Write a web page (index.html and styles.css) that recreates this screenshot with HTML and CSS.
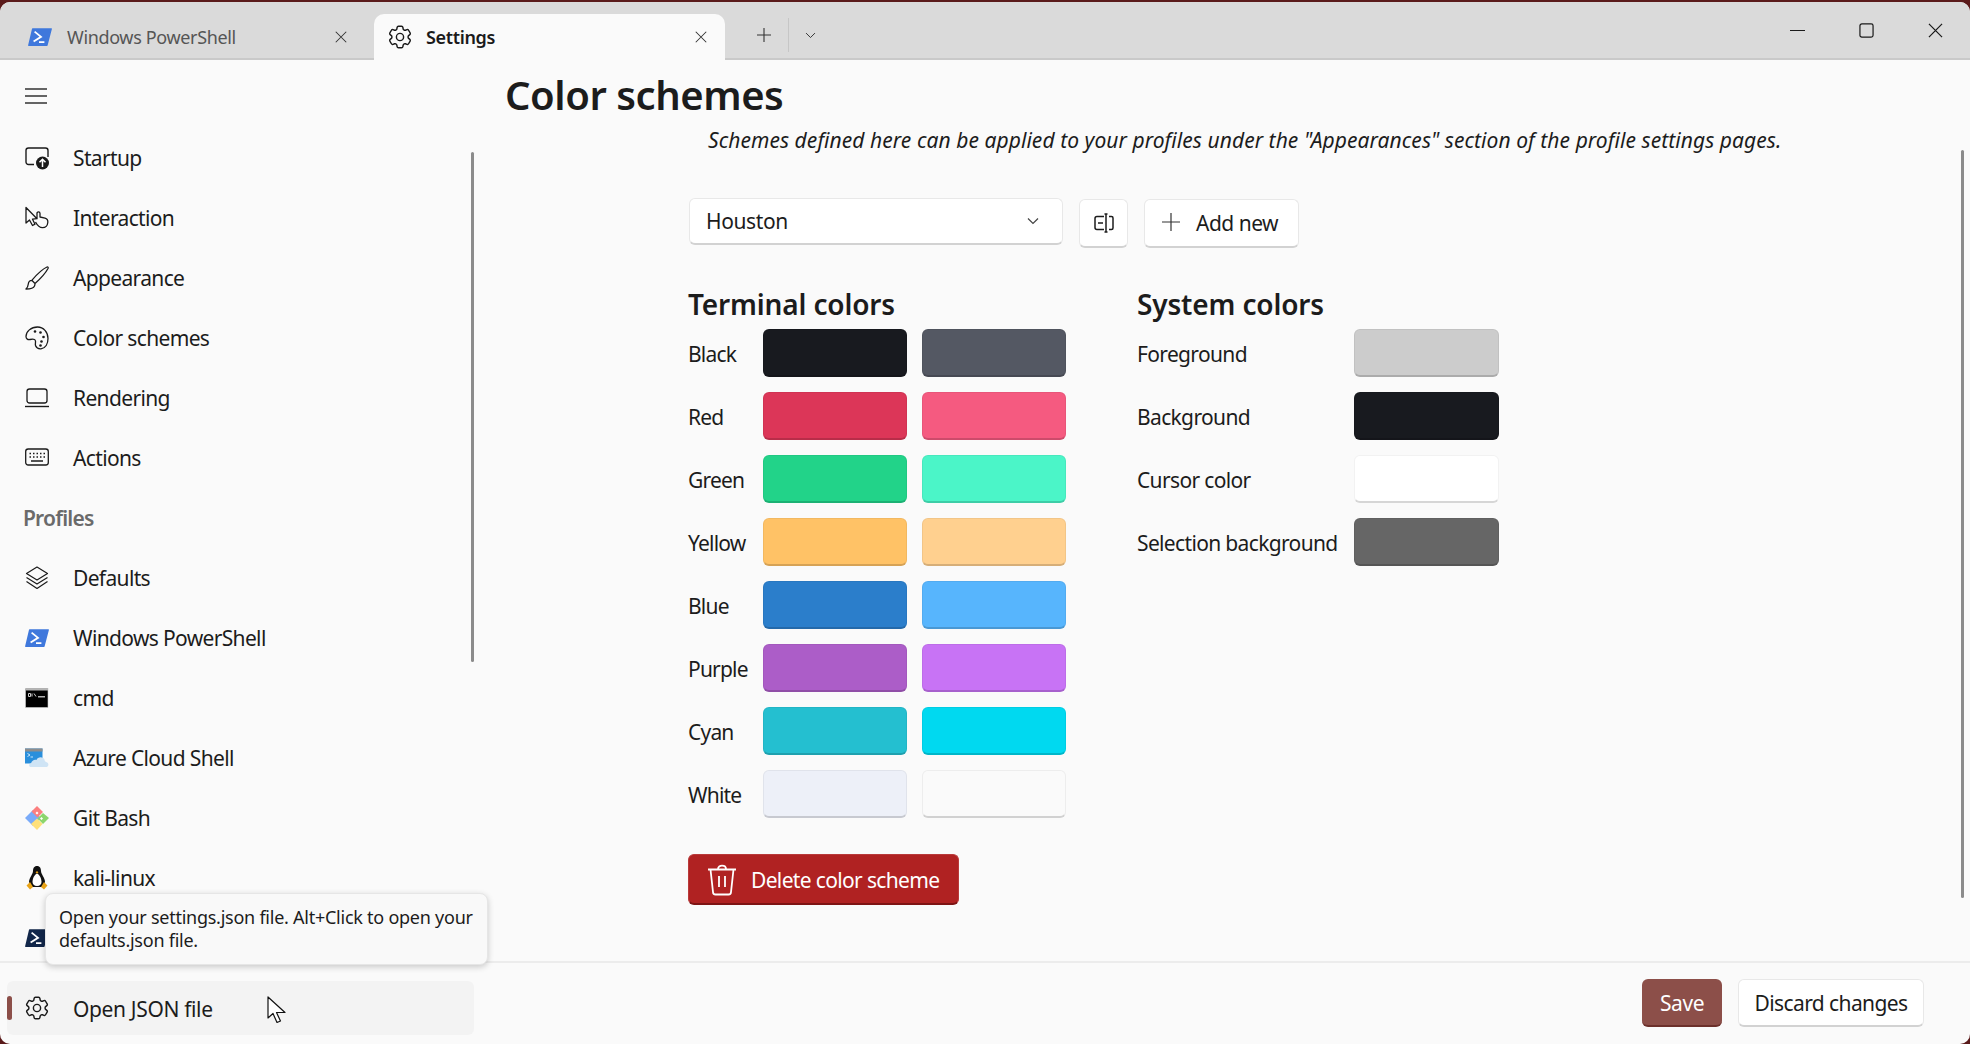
FILE: index.html
```html
<!DOCTYPE html>
<html lang="en">
<head>
    <meta charset="UTF-8">
    <meta name="viewport" content="width=device-width, initial-scale=1.0">
    <title>Settings</title>
    <link rel="stylesheet" href="styles.css">
</head>
<body>
    <svg class="defs" width="0" height="0">
        <symbol id="gear" viewBox="2 2 20 20">
            <path fill="none" stroke="currentColor" stroke-width="1.2" d="M9.594 3.94c.09-.542.56-.94 1.11-.94h2.593c.55 0 1.02.398 1.11.94l.213 1.281c.063.374.313.686.645.87.074.04.147.083.22.127.325.196.72.257 1.075.124l1.217-.456a1.125 1.125 0 011.37.49l1.296 2.247a1.125 1.125 0 01-.26 1.431l-1.003.827c-.293.241-.438.613-.43.992a7.723 7.723 0 010 .255c-.008.378.137.75.43.991l1.004.827c.424.35.534.955.26 1.43l-1.298 2.247a1.125 1.125 0 01-1.369.491l-1.217-.456c-.355-.133-.75-.072-1.076.124a6.57 6.57 0 01-.22.128c-.331.183-.581.495-.644.869l-.213 1.28c-.09.543-.56.941-1.11.941h-2.594c-.55 0-1.02-.398-1.11-.94l-.213-1.281c-.062-.374-.312-.686-.644-.87a6.52 6.52 0 01-.22-.127c-.325-.196-.72-.257-1.076-.124l-1.217.456a1.125 1.125 0 01-1.369-.49l-1.297-2.247a1.125 1.125 0 01.26-1.431l1.004-.827c.292-.24.437-.613.43-.992a6.932 6.932 0 010-.255c.007-.378-.138-.75-.43-.99l-1.004-.828a1.125 1.125 0 01-.26-1.43l1.297-2.247a1.125 1.125 0 011.37-.491l1.216.456c.356.133.751.072 1.076-.124.072-.044.146-.087.22-.128.332-.183.582-.495.644-.869l.214-1.281z"/>
            <circle cx="12" cy="12" r="3" fill="none" stroke="currentColor" stroke-width="1.2"/>
        </symbol>
        <symbol id="ps" viewBox="0 0 24 24">
            <path fill="#3f78dc" d="M4.6 3.2H23.4c.5 0 .6.3.5.7L19.6 20.4c-.1.3-.3.5-.7.5H.6c-.4 0-.6-.3-.5-.7L4 3.7c.1-.3.3-.5.6-.5z"/>
            <path fill="none" stroke="#fff" stroke-width="1.8" d="M6.6 6.6 13 11.8 5.6 16.4M11 17.2h5.4"/>
        </symbol>
        <symbol id="close" viewBox="0 0 16 16">
            <path fill="none" stroke="currentColor" stroke-width="1.2" d="M2 2 14 14M14 2 2 14"/>
        </symbol>
    </svg>

    <div class="app">
        <header class="titlebar">
            <div class="tab">
                <svg class="tab-icon"><use href="#ps"/></svg>
                <span class="tab-name">Windows PowerShell</span>
                <svg class="tab-close"><use href="#close"/></svg>
            </div>
            <div class="tab tab-active">
                <svg class="tab-icon"><use href="#gear"/></svg>
                <span class="tab-name">Settings</span>
                <svg class="tab-close"><use href="#close"/></svg>
            </div>
            <div class="tab-tools">
                <svg class="tool-plus" viewBox="0 0 16 16"><path fill="none" stroke="#333" stroke-width="1.1" d="M8 1V15M1 8H15"/></svg>
                <span class="tool-divider"></span>
                <svg class="tool-chevron" viewBox="0 0 16 16"><path fill="none" stroke="#333" stroke-width="1.2" d="M2.500 5 8 10.500 13.500 5"/></svg>
            </div>
            <div class="window-controls">
                <svg class="win-btn" viewBox="0 0 16 16"><path stroke="#1a1a1a" stroke-width="1.3" d="M0 8H16"/></svg>
                <svg class="win-btn" viewBox="0 0 16 16"><rect x="1" y="1" width="14" height="14" rx="2" fill="none" stroke="#1a1a1a" stroke-width="1.3"/></svg>
                <svg class="win-btn" viewBox="0 0 16 16"><path fill="none" stroke="#1a1a1a" stroke-width="1.3" d="M1 1 15 15M15 1 1 15"/></svg>
            </div>
        </header>

        <div class="body-row">
            <nav class="sidebar">
                <div class="hamburger">
                    <svg width="22" height="16" viewBox="0 0 22 16"><path stroke="#333" stroke-width="1.4" d="M0 1H22M0 8H22M0 15H22"/></svg>
                </div>
                <a class="nav-item">
                    <svg class="nav-icon" viewBox="0 0 24 24"><path fill="none" stroke="#1a1a1a" stroke-width="1.4" d="M9 18.500H3.500A2.500 2.500 0 0 1 1 16V4.500A2.500 2.500 0 0 1 3.500 2h17A2.500 2.500 0 0 1 23 4.500V11"/><circle cx="17.500" cy="17" r="6.500" fill="#1a1a1a"/><path fill="none" stroke="#fff" stroke-width="1.5" d="M17.500 21V13.500M14.500 16.300 17.500 13.300 20.500 16.300"/></svg>
                    <span>Startup</span>
                </a>
                <a class="nav-item">
                    <svg class="nav-icon" viewBox="0 0 24 24"><path fill="none" stroke="#1a1a1a" stroke-width="1.3" stroke-linejoin="round" d="M1 1.500V17l3.500-3 3 5.500 2.500-1.300-2.500-5 4.500-.5zM12 6.500l0 6.500M12 7.500c0-2.300 3-2.300 3 0V11l5 1.200c2.500.8 3 2.500 2.800 4.300-.3 3-2.300 5.200-5.300 5.200-3.300 0-5-2-7-5.700"/></svg>
                    <span>Interaction</span>
                </a>
                <a class="nav-item">
                    <svg class="nav-icon" viewBox="0 0 24 24"><path fill="none" stroke="#1a1a1a" stroke-width="1.3" stroke-linejoin="round" d="M22 1c1-.3 1.500.5 1 1.500C20 8 14 14 10 17.500L6.800 14.300C10.500 10 16.500 3.500 22 1zM6.800 14.300C4 14.500 3.500 16 3.300 18 3.100 20 2 22 1 23c4 0 7.500-.5 8.500-3 .5-1 .5-1.500.5-2.500"/></svg>
                    <span>Appearance</span>
                </a>
                <a class="nav-item">
                    <svg class="nav-icon" viewBox="0 0 24 24"><path fill="none" stroke="#1a1a1a" stroke-width="1.3" d="M12.500 1C6 1 1 5.500 1 10.500c0 2.500 2 3.500 4 3 2.500-.6 4.500-.8 5.300.8 .8 1.500-.5 3.500.3 5.500 .8 2 3 3.200 5.400 3 4.500-.5 7-5 7-10.300C23 6 18.500 1 12.500 1z"/><circle cx="10" cy="5.500" r="1.300" fill="#1a1a1a"/><circle cx="15.500" cy="6.500" r="1.300" fill="#1a1a1a"/><circle cx="18.500" cy="11" r="1.300" fill="#1a1a1a"/><circle cx="16.500" cy="15.500" r="1.300" fill="#1a1a1a"/><circle cx="15.500" cy="19.500" r="1.300" fill="#1a1a1a"/></svg>
                    <span>Color schemes</span>
                </a>
                <a class="nav-item">
                    <svg class="nav-icon" viewBox="0 0 24 24"><rect x="2" y="3" width="20" height="14" rx="2.500" fill="none" stroke="#1a1a1a" stroke-width="1.3"/><path stroke="#1a1a1a" stroke-width="1.4" d="M0 20.500H24"/></svg>
                    <span>Rendering</span>
                </a>
                <a class="nav-item">
                    <svg class="nav-icon" viewBox="0 0 24 24"><rect x=".7" y="3" width="22.600" height="16" rx="2.500" fill="none" stroke="#1a1a1a" stroke-width="1.3"/><path stroke="#1a1a1a" stroke-width="1.5" stroke-dasharray="1.500 2" d="M4.500 7.500H20M4.500 11H20"/><path stroke="#1a1a1a" stroke-width="1.5" d="M6 15H18"/></svg>
                    <span>Actions</span>
                </a>
                <div class="nav-heading">Profiles</div>
                <a class="nav-item">
                    <svg class="nav-icon" viewBox="0 0 24 24"><path fill="none" stroke="#1a1a1a" stroke-width="1.2" stroke-linejoin="round" d="M12 1 22.500 7.500 12 14 1.500 7.500zM1.500 11.500 12 18 22.500 11.500M1.500 15.500 12 22.500 22.500 15.500"/></svg>
                    <span>Defaults</span>
                </a>
                <a class="nav-item">
                    <svg class="nav-icon"><use href="#ps"/></svg>
                    <span>Windows PowerShell</span>
                </a>
                <a class="nav-item">
                    <svg class="nav-icon" viewBox="0 0 24 24"><rect x=".5" y="2.500" width="22.500" height="19" fill="#000" stroke="#cfcfcf" stroke-width=".6"/><rect x=".5" y="2.500" width="22.500" height="2" fill="#b5b5b5"/><path fill="none" stroke="#ccc" stroke-width="1" d="M3.500 7.500h2v3h-2zM7 7.500v3M9 7.500l2 3"/><path stroke="#ddd" stroke-width="1.200" d="M13 10.800H20"/></svg>
                    <span>cmd</span>
                </a>
                <a class="nav-item">
                    <svg class="nav-icon" viewBox="0 0 24 24"><rect x="0" y="2.500" width="17.500" height="15" fill="#2a8fdc"/><rect x="0" y="2.500" width="17.500" height="3" fill="#8d8d8d"/><path fill="none" stroke="#d8eefc" stroke-width=".9" d="M2.500 7.500 5 9 2.500 10.500M5.500 11H8"/><path fill="#cfe4f5" d="M6 21c-2.500 0-2.500-3.500 0-3.800C7 14.500 9.500 13 11.500 14c1-3 6-4 8-.5 0 1 .5 2 1.500 2.500 3.500 1 3 5-.5 5z"/></svg>
                    <span>Azure Cloud Shell</span>
                </a>
                <a class="nav-item">
                    <svg class="nav-icon" viewBox="0 0 24 24"><path fill="#7aabf9" d="M0 12 8 4l8 8-8 8z"/><path fill="#fb7f7f" d="M6.500 5.500 12 0l6 6-5.500 5.500z"/><path fill="#8cd56c" d="M12.500 12.500 18 7l6 5-6 6z"/><path fill="#ffe07a" d="M6 18l6-5.500L17.500 18 12 24z"/><path fill="#fff" d="M10.500 7 12 5.500l1.500 1.500L12 8.500zM15 12.500l1.500-1.500 1.500 1.500-1.500 1.500z"/></svg>
                    <span>Git Bash</span>
                </a>
                <a class="nav-item">
                    <svg class="nav-icon" viewBox="0 0 24 24"><path fill="#111" d="M12 0c-3 0-4 2.500-4 5 0 3-4 7-4 11 0 2 1 4 3 5h10c2-1 3-3 3-5 0-4-4-8-4-11 0-2.500-1-5-4-5z"/><path fill="#fff" d="M12 7.500c-2.500 1-4.500 5-4.500 8.500 0 2 1.500 4 4.500 4s4.500-2 4.500-4c0-3.500-2-7.500-4.500-8.500z"/><path fill="#e8a317" d="M12 5 10.500 6.500 12 7.500 13.500 6.500zM1.500 19.500 5 16l3 5-3 2.500zM22.500 19.500 19 16l-3 5 3 2.500z"/></svg>
                    <span>kali-linux</span>
                </a>
                <a class="nav-item">
                    <svg class="nav-icon" viewBox="0 0 24 24"><path fill="#12274a" d="M4.600 3.200H23.400c.5 0 .6.3.5.7L19.600 20.400c-.1.3-.3.5-.7.5H.6c-.4 0-.6-.3-.5-.7L4 3.700c.1-.3.300-.5.600-.5z"/><path fill="none" stroke="#fff" stroke-width="1.800" d="M6.600 6.600 13 11.800 5.600 16.400M11 17.200h5.400"/></svg>
                </a>
                <div class="scrollbar scrollbar-nav"></div>
            </nav>

            <main class="content">
                <h1 class="page-title">Color schemes</h1>
                <p class="page-desc">Schemes defined here can be applied to your profiles under the "Appearances" section of the profile settings pages.</p>

                <div class="scheme-bar">
                    <div class="dropdown">
                        <span>Houston</span>
                        <svg width="12" height="12" viewBox="0 0 12 12"><path fill="none" stroke="#444" stroke-width="1.200" d="M1 3.500 6 8.500 11 3.500"/></svg>
                    </div>
                    <button class="btn btn-icon">
                        <svg width="22" height="22" viewBox="0 0 22 22"><path fill="none" stroke="#1c1c1c" stroke-width="1.500" d="M11 4.500H4a2 2 0 0 0-2 2v9a2 2 0 0 0 2 2h7M16 4.500h2.500a1.500 1.500 0 0 1 1.500 1.500v10a1.500 1.500 0 0 1-1.500 1.500H16M11.500 2h3M13 2V20M11.500 20h3M5 11H10"/></svg>
                    </button>
                    <button class="btn btn-add">
                        <svg class="add-plus" width="20" height="20" viewBox="0 0 20 20"><path stroke="#333" stroke-width="1.200" d="M10 1V19M1 10H19"/></svg>
                        <span>Add new</span>
                    </button>
                </div>

                <div class="color-columns">
                    <section class="color-group">
                        <h2>Terminal colors</h2>
                        <div class="swatch-grid terminal-grid">
                            <span>Black</span><div class="swatch black"></div><div class="swatch bright-black"></div>
                            <span>Red</span><div class="swatch red"></div><div class="swatch bright-red"></div>
                            <span>Green</span><div class="swatch green"></div><div class="swatch bright-green"></div>
                            <span>Yellow</span><div class="swatch yellow"></div><div class="swatch bright-yellow"></div>
                            <span>Blue</span><div class="swatch blue"></div><div class="swatch bright-blue"></div>
                            <span>Purple</span><div class="swatch purple"></div><div class="swatch bright-purple"></div>
                            <span>Cyan</span><div class="swatch cyan"></div><div class="swatch bright-cyan"></div>
                            <span>White</span><div class="swatch white"></div><div class="swatch bright-white"></div>
                        </div>
                    </section>
                    <section class="color-group">
                        <h2>System colors</h2>
                        <div class="swatch-grid system-grid">
                            <span>Foreground</span><div class="swatch foreground"></div>
                            <span>Background</span><div class="swatch black"></div>
                            <span>Cursor color</span><div class="swatch cursor"></div>
                            <span>Selection background</span><div class="swatch selection"></div>
                        </div>
                    </section>
                </div>

                <button class="btn-delete">
                    <svg width="30" height="32" viewBox="0 0 30 32"><path fill="none" stroke="#fff" stroke-width="1.800" stroke-linejoin="round" d="M1 5.500H29M3.500 5.500 6 28a2.500 2.500 0 0 0 2.500 2.500H21.500a2.500 2.500 0 0 0 2.500-2.500L26.500 5.500M11 5c0-4.500 8-4.500 8 0M12 12V23M18 12V23"/></svg>
                    <span>Delete color scheme</span>
                </button>
                <div class="scrollbar scrollbar-main"></div>
            </main>
        </div>

        <footer class="footer">
            <a class="nav-item json-item">
                <svg class="nav-icon"><use href="#gear"/></svg>
                <span>Open JSON file</span>
            </a>
            <div class="footer-actions">
                <button class="btn-save">Save</button>
                <button class="btn btn-discard">Discard changes</button>
            </div>
        </footer>

        <div class="tooltip">Open your settings.json file. Alt+Click to open your defaults.json file.</div>
        <svg class="cursor-arrow" width="20" height="28" viewBox="0 0 20 28"><path fill="#fff" stroke="#111" stroke-width="1.200" stroke-linejoin="round" d="M1 1V22L6 17.500 10 26.500 13.500 25 9.500 16.500H18z"/></svg>
    </div>
</body>
</html>
```

FILE: styles.css
```css
* {
    box-sizing: border-box;
}

body {
    margin: 0;
    height: 1044px;
    overflow: hidden;
    padding-top: 2px;
    background-color: #5a1a1a;
    font-family: "Noto Sans", sans-serif;
    font-size: 21px;
    color: #1c1c1c;
}

.defs {
    display: block;
    height: 0;
}

.app {
    position: relative;
    display: flex;
    flex-direction: column;
    height: 1042px;
    border-radius: 10px;
    overflow: hidden;
    background-color: #fafafa;
}

/* title bar */
.titlebar {
    display: flex;
    align-items: flex-end;
    flex: 0 0 58px;
    background-color: #dadada;
    border-bottom: 2px solid #c9c9c9;
}

.tab {
    display: flex;
    align-items: center;
    width: 372px;
    height: 46px;
    padding: 0 24px 0 28px;
    margin-bottom: -2px;
    font-size: 18px;
    letter-spacing: -0.35px;
    color: #555;
}

.tab-active {
    width: 351px;
    margin-left: 2px;
    padding-left: 14px;
    padding-right: 17px;
    background-color: #fafafa;
    border-radius: 10px 10px 0 0;
    font-weight: 600;
    color: #1a1a1a;
}

.tab-icon {
    width: 24px;
    height: 24px;
    flex: none;
    margin-right: 15px;
}

.tab-active .tab-icon {
    margin-right: 14px;
}

.tab-name {
    flex: 1;
}

.tab-close {
    width: 14px;
    height: 14px;
    color: #333;
}

.tab-tools {
    display: flex;
    align-items: center;
    height: 46px;
    margin-left: 31px;
}

.tool-plus {
    width: 16px;
    height: 16px;
}

.tool-divider {
    width: 1px;
    height: 34px;
    margin: 0 16px;
    background-color: #c6c6c6;
}

.tool-chevron {
    width: 13px;
    height: 13px;
    margin-left: -1px;
}

.window-controls {
    display: flex;
    align-items: center;
    gap: 54px;
    height: 30px;
    margin: 0 27px 13px auto;
}

.win-btn {
    width: 15px;
    height: 15px;
}

/* main area */
.body-row {
    position: relative;
    display: flex;
    flex: 1;
    min-height: 0;
}

.sidebar {
    position: relative;
    flex: 0 0 484px;
    overflow: hidden;
}

.hamburger {
    display: flex;
    align-items: center;
    height: 68px;
    padding: 4px 0 0 25px;
}

.nav-item {
    display: flex;
    align-items: center;
    gap: 24px;
    height: 60px;
    padding-left: 25px;
    letter-spacing: -0.65px;
}

.nav-icon {
    width: 24px;
    height: 24px;
    flex: none;
    color: #1a1a1a;
}

.nav-heading {
    display: flex;
    align-items: center;
    height: 60px;
    padding-left: 23px;
    font-weight: 600;
    letter-spacing: -0.8px;
    color: #6a6a6a;
}

.scrollbar {
    position: absolute;
    width: 3px;
    border-radius: 2px;
    background-color: #8b8b8b;
}

.scrollbar-nav {
    top: 92px;
    left: 471px;
    height: 510px;
}

.scrollbar-main {
    top: 90px;
    right: 6px;
    height: 748px;
}

.content {
    flex: 1;
    min-width: 0;
    padding: 8px 0 0 21px;
}

.page-title {
    margin: 0;
    font-size: 40px;
    line-height: 54px;
    font-weight: 600;
    letter-spacing: -0.45px;
}

.page-desc {
    margin: 4px 0 0 203px;
    font-style: italic;
    line-height: 28px;
    letter-spacing: 0.06px;
}

.scheme-bar {
    display: flex;
    align-items: flex-start;
    margin: 44px 0 0 184px;
}

.dropdown {
    display: flex;
    align-items: center;
    justify-content: space-between;
    width: 374px;
    height: 47px;
    padding: 0 23px 0 16px;
    background-color: #fff;
    border: 1px solid #e8e8e8;
    border-bottom: 2px solid #d2d2d2;
    border-radius: 6px;
    letter-spacing: -0.4px;
}

.btn {
    font-family: inherit;
    font-size: 21px;
    letter-spacing: -0.5px;
    color: #1c1c1c;
    background-color: #fff;
    border: 1px solid #e8e8e8;
    border-bottom: 2px solid #d2d2d2;
    border-radius: 6px;
    padding: 0;
}

.btn-icon {
    display: flex;
    align-items: center;
    justify-content: center;
    width: 49px;
    height: 49px;
    margin: 1px 0 0 16px;
}

.btn-add {
    display: flex;
    align-items: center;
    gap: 15px;
    width: 155px;
    height: 49px;
    margin: 1px 0 0 16px;
    padding-left: 16px;
}

.add-plus {
    margin-top: -3px;
}

.color-columns {
    display: flex;
    margin: 35px 0 0 183px;
}

.color-group h2 {
    margin: 0;
    font-size: 28px;
    line-height: 42px;
    font-weight: 600;
    letter-spacing: -0.15px;
}

.color-group:first-child {
    width: 449px;
}

.swatch-grid {
    display: grid;
    grid-auto-rows: 48px;
    gap: 15px;
    align-items: center;
    margin-top: 4px;
    letter-spacing: -0.8px;
}

.swatch-grid span {
    padding-top: 1px;
    white-space: nowrap;
}

.terminal-grid {
    grid-template-columns: 60px 144px 144px;
}

.system-grid {
    grid-template-columns: 202px 145px;
    letter-spacing: -0.65px;
}

.swatch {
    height: 48px;
    border: 1px solid rgba(0, 0, 0, 0.05);
    border-bottom: 2px solid rgba(0, 0, 0, 0.16);
    border-radius: 6px;
}

.black { background-color: #181a1f; }
.bright-black { background-color: #545863; }
.red { background-color: #dc3658; }
.bright-red { background-color: #f55a80; }
.green { background-color: #22d389; }
.bright-green { background-color: #4bf5c8; }
.yellow { background-color: #ffc266; }
.bright-yellow { background-color: #ffd08f; }
.blue { background-color: #2b7ecb; }
.bright-blue { background-color: #57b5fd; }
.purple { background-color: #ac5dc8; }
.bright-purple { background-color: #c873f5; }
.cyan { background-color: #24bfd0; }
.bright-cyan { background-color: #00d9f0; }
.white { background-color: #edf0f8; }
.bright-white { background-color: #fafafa; }
.foreground { background-color: #cccccc; }
.cursor { background-color: #ffffff; }
.selection { background-color: #666666; }

.btn-delete {
    display: flex;
    align-items: center;
    gap: 14px;
    width: 271px;
    height: 51px;
    margin: 36px 0 0 183px;
    padding: 1px 0 0 18px;
    font-family: inherit;
    font-size: 21px;
    letter-spacing: -0.65px;
    color: #fff;
    background-color: #b02222;
    border: 1px solid #b93a3a;
    border-bottom: 2px solid #7e1414;
    border-radius: 6px;
}

/* footer */
.footer {
    display: flex;
    align-items: flex-start;
    justify-content: space-between;
    flex: 0 0 83px;
    padding: 16px 46px 0 0;
    border-top: 2px solid #ececec;
}

.json-item {
    position: relative;
    width: 467px;
    height: 54px;
    margin: 2px 0 0 7px;
    padding: 2px 0 0 18px;
    background-color: #f3f3f3;
    border-radius: 6px;
    letter-spacing: -0.35px;
}

.json-item .nav-icon {
    margin-top: -2px;
}

.json-item::before {
    content: "";
    position: absolute;
    left: 0;
    top: 15px;
    width: 5px;
    height: 24px;
    border-radius: 3px;
    background-color: #8c4f49;
}

.footer-actions {
    display: flex;
    gap: 16px;
}

.btn-save {
    width: 80px;
    height: 48px;
    padding: 1px 0 0;
    font-family: inherit;
    font-size: 21px;
    letter-spacing: -0.4px;
    color: #fff;
    background-color: #8c4f49;
    border: none;
    border-bottom: 2px solid #6c302b;
    border-radius: 6px;
}

.btn-discard {
    width: 186px;
    height: 48px;
    padding-top: 1px;
    letter-spacing: -0.6px;
}

/* things lying over the page */
.tooltip {
    position: absolute;
    left: 45px;
    top: 891px;
    width: 443px;
    height: 72px;
    padding: 12px 4px 12px 13px;
    font-size: 18px;
    line-height: 23px;
    letter-spacing: -0.25px;
    background-color: #f9f9f9;
    border: 1px solid #e6e6e6;
    border-radius: 8px;
    box-shadow: 0 2px 6px rgba(0, 0, 0, 0.2);
}

.cursor-arrow {
    position: absolute;
    left: 267px;
    top: 994px;
}
```
